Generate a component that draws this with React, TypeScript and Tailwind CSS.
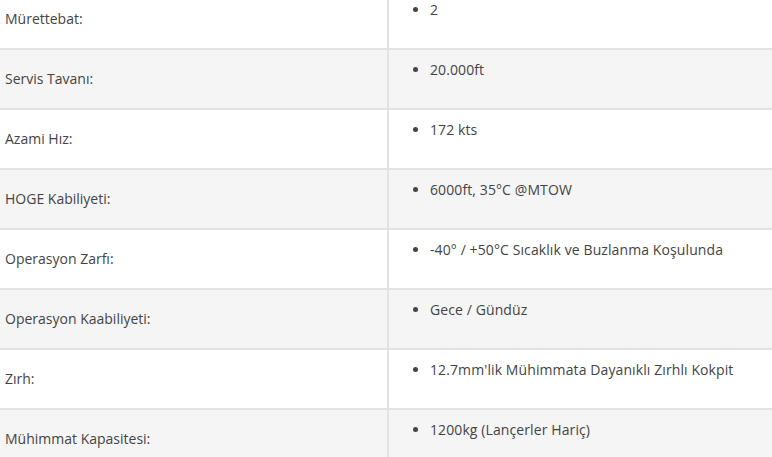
import React from 'react'

const rows = [
  { label: 'Mürettebat:', value: '2' },
  { label: 'Servis Tavanı:', value: '20.000ft' },
  { label: 'Azami Hız:', value: '172 kts' },
  { label: 'HOGE Kabiliyeti:', value: '6000ft, 35°C @MTOW' },
  { label: 'Operasyon Zarfı:', value: '-40° / +50°C Sıcaklık ve Buzlanma Koşulunda' },
  { label: 'Operasyon Kaabiliyeti:', value: 'Gece / Gündüz' },
  { label: 'Zırh:', value: "12.7mm'lik Mühimmata Dayanıklı Zırhlı Kokpit" },
  { label: 'Mühimmat Kapasitesi:', value: '1200kg (Lançerler Hariç)' },
]

export default function App() {
  return (
    <div className="w-[772px] h-[457px] overflow-hidden bg-white text-[14px] leading-[20px] text-[#444]" style={{ fontFamily: '"Open Sans", "Noto Sans", sans-serif' }}>
      <div className="mt-[-10px]">
        {rows.map((row, i) => (
          <div
            key={row.label}
            className={`grid grid-cols-[389px_1fr] h-[60px] border-b-2 border-[#e2e2e2] ${i % 2 === 1 ? 'bg-[#f5f5f5]' : 'bg-white'}`}
          >
            <div className="border-r-2 border-[#e2e2e2] pl-[5px] flex items-center">
              {row.label}
            </div>
            <div className="pt-[10px]">
              <ul className="list-disc pl-[41px] tracking-[0.1px]">
                <li>{row.value}</li>
              </ul>
            </div>
          </div>
        ))}
      </div>
    </div>
  )
}
